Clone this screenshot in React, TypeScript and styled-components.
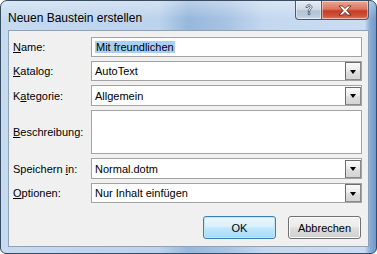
import React from "react";
import styled, { createGlobalStyle } from "styled-components";

const Global = createGlobalStyle`
  html, body { margin: 0; padding: 0; background: #ffffff; }
  body { font-family: "Liberation Sans", Arial, sans-serif; }
`;

const Window = styled.div`
  width: 377px;
  height: 254px;
  box-sizing: border-box;
  border: 1px solid #3a4c62;
  border-radius: 7px 7px 6px 6px;
  padding: 0 7px 6px 7px;
  display: flex;
  flex-direction: column;
  overflow: hidden;
  background:
    linear-gradient(180deg, rgba(255,255,255,0.35) 0px, rgba(255,255,255,0) 18px),
    linear-gradient(90deg, #c6daf0 0%, #bcd3ec 42%, #97b7dc 50%, #a7c3e3 60%, #c3d8ef 70%, #cadcf1 97%, #86acd8 98.4%, #6f99ce 100%);
`;

const TitleBar = styled.div`
  height: 29px;
  display: flex;
  align-items: flex-start;
  flex-shrink: 0;
`;

const Title = styled.div`
  flex: 1;
  font-size: 12px;
  color: #000;
  padding-top: 10px;
  line-height: 14px;
`;

const CaptionButtons = styled.div`
  display: flex;
`;

const CaptionButton = styled.div<{ $close?: boolean }>`
  width: ${(p) => (p.$close ? 47 : 27)}px;
  height: 19px;
  box-sizing: border-box;
  border: 1px solid #4b5a6e;
  border-top: none;
  border-radius: ${(p) => (p.$close ? "0 0 4px 0" : "0 0 0 4px")};
  ${(p) => (p.$close ? "border-left: none;" : "")}
  background: ${(p) =>
    p.$close
      ? "linear-gradient(180deg, #eaa597 0%, #dc7660 45%, #c63c24 55%, #d0543a 85%, #e3866a 100%)"
      : "linear-gradient(180deg, #e4ebf3 0%, #cfdbe8 45%, #b3c4d7 55%, #bccbdc 85%, #d2deea 100%)"};
  box-shadow: inset 0 0 0 1px rgba(255,255,255,0.45);
  display: flex;
  align-items: center;
  justify-content: center;
`;

const Client = styled.div`
  flex: 1;
  box-sizing: border-box;
  background: #f0f0f0;
  border: 1px solid #8ea2ba;
  padding: 6px 6px 0 4px;
  display: flex;
  flex-direction: column;
`;

const Form = styled.div`
  display: grid;
  grid-template-columns: 78px 1fr;
  grid-template-rows: 20px 20px 21px 44px 21px 20px;
  row-gap: 4px;
  align-items: center;
`;

const Label = styled.label`
  font-size: 11px;
  color: #000;
  align-self: center;
  u { text-decoration: underline; text-underline-offset: 1px; }
`;

const Field = styled.div<{ $tall?: boolean }>`
  height: 100%;
  box-sizing: border-box;
  border: 1px solid #a3a3a3;
  background: #fff;
  display: flex;
  align-items: ${(p) => (p.$tall ? "flex-start" : "center")};
  font-size: 11px;
  color: #000;
  padding-left: 2px;
`;

const FieldText = styled.span`
  flex: 1;
  padding-left: 1px;
  white-space: nowrap;
`;

const Selected = styled.span`
  background: #a9cff4;
  padding: 0 1px;
  line-height: 14px;
`;

const DropButton = styled.div`
  width: 16px;
  height: 18px;
  box-sizing: border-box;
  border: 1px solid #6c6c6c;
  border-right-color: #8a8a8a;
  border-bottom-color: #8a8a8a;
  background: linear-gradient(180deg, #fafafa 0%, #ececec 45%, #dedede 55%, #d3d3d3 100%);
  display: flex;
  align-items: center;
  justify-content: center;
`;

const Arrow = styled.div`
  width: 0;
  height: 0;
  border-left: 3.5px solid transparent;
  border-right: 3.5px solid transparent;
  border-top: 4px solid #000;
  margin-top: 1px;
`;

const ButtonRow = styled.div`
  display: flex;
  justify-content: flex-end;
  gap: 12px;
  margin-top: 13px;
  margin-right: 1px;
`;

const Button = styled.button<{ $default?: boolean }>`
  width: 73px;
  height: 23px;
  box-sizing: border-box;
  border-radius: 3px;
  border: 1px solid ${(p) => (p.$default ? "#3c7fb1" : "#707070")};
  background: ${(p) =>
    p.$default
      ? "linear-gradient(180deg, #eaf6fd 0%, #d9f0fc 45%, #bee6fd 55%, #a7d9f5 100%)"
      : "linear-gradient(180deg, #f2f2f2 0%, #ebebeb 45%, #dddddd 55%, #cfcfcf 100%)"};
  box-shadow: inset 0 0 0 1px ${(p) => (p.$default ? "#c2e4f8" : "#fcfcfc")};
  font-family: "Liberation Sans", Arial, sans-serif;
  font-size: 11px;
  color: #000;
  padding: 0;
`;

const Combo: React.FC<{ value: string }> = ({ value }) => (
  <Field>
    <FieldText>{value}</FieldText>
    <DropButton>
      <Arrow />
    </DropButton>
  </Field>
);

export default function App() {
  return (
    <>
      <Global />
      <Window>
        <TitleBar>
          <Title>Neuen Baustein erstellen</Title>
          <CaptionButtons>
            <CaptionButton>
              <svg width="10" height="12" viewBox="0 0 10 12">
                <path
                  d="M2 3.5 C2 1.5 3.5 0.8 5 0.8 C6.8 0.8 8 1.8 8 3.3 C8 5 5.8 5.3 5.8 7 L5.8 7.6 L4.2 7.6 L4.2 6.8 C4.2 4.8 6.3 4.5 6.3 3.3 C6.3 2.6 5.8 2.2 5 2.2 C4.1 2.2 3.7 2.8 3.7 3.5 Z M4.1 8.8 L5.9 8.8 L5.9 10.6 L4.1 10.6 Z"
                  fill="#fff"
                  stroke="#3d4b5e"
                  strokeWidth="0.8"
                />
              </svg>
            </CaptionButton>
            <CaptionButton $close>
              <svg width="14" height="11" viewBox="0 0 14 11">
                <path
                  d="M1 1 L4.5 1 L7 3.6 L9.5 1 L13 1 L8.8 5.5 L13 10 L9.5 10 L7 7.4 L4.5 10 L1 10 L5.2 5.5 Z"
                  fill="#fff"
                  stroke="#5a1d12"
                  strokeWidth="0.8"
                  strokeLinejoin="round"
                />
              </svg>
            </CaptionButton>
          </CaptionButtons>
        </TitleBar>
        <Client>
          <Form>
            <Label>
              <u>N</u>ame:
            </Label>
            <Field>
              <FieldText>
                <Selected>Mit freundlichen</Selected>
              </FieldText>
            </Field>

            <Label>
              <u>K</u>atalog:
            </Label>
            <Combo value="AutoText" />

            <Label>
              K<u>a</u>tegorie:
            </Label>
            <Combo value="Allgemein" />

            <Label>
              <u>B</u>eschreibung:
            </Label>
            <Field $tall />

            <Label>
              Speichern <u>i</u>n:
            </Label>
            <Combo value="Normal.dotm" />

            <Label>
              <u>O</u>ptionen:
            </Label>
            <Combo value="Nur Inhalt einfügen" />
          </Form>
          <ButtonRow>
            <Button $default>OK</Button>
            <Button>Abbrechen</Button>
          </ButtonRow>
        </Client>
      </Window>
    </>
  );
}
